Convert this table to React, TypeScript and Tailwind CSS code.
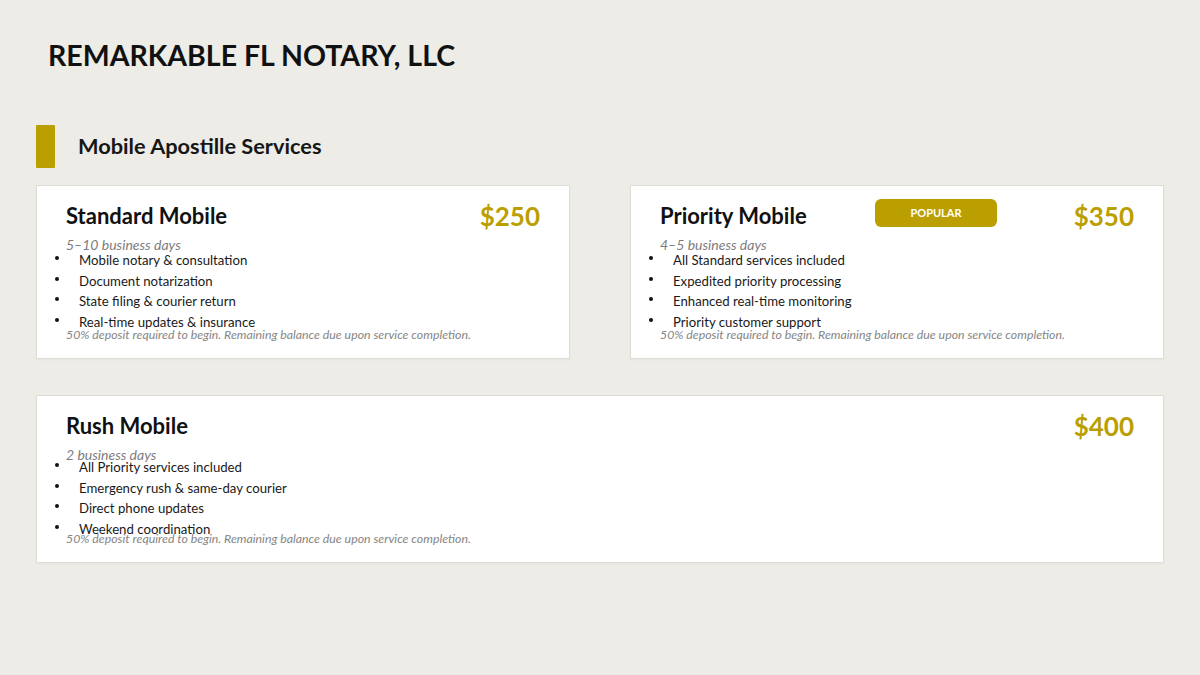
import { FC } from "react";

type Plan = {
  name: string;
  price: string;
  days: string;
  items: string[];
  popular?: boolean;
  tight?: boolean;
};

const plans: Plan[] = [
  {
    name: "Standard Mobile",
    price: "$250",
    days: "5–10 business days",
    items: [
      "Mobile notary & consultation",
      "Document notarization",
      "State filing & courier return",
      "Real-time updates & insurance",
    ],
  },
  {
    name: "Priority Mobile",
    price: "$350",
    days: "4–5 business days",
    popular: true,
    items: [
      "All Standard services included",
      "Expedited priority processing",
      "Enhanced real-time monitoring",
      "Priority customer support",
    ],
  },
];

const rush: Plan = {
  name: "Rush Mobile",
  price: "$400",
  days: "2 business days",
  tight: true,
  items: [
    "All Priority services included",
    "Emergency rush & same-day courier",
    "Direct phone updates",
    "Weekend coordination",
  ],
};

const PlanCard: FC<{ plan: Plan }> = ({ plan }) => {
  return (
    <div
      className={`relative bg-white border border-[#dedcd5] shadow-[0_1px_2px_rgba(0,0,0,0.04)] px-[29px] pt-[14px] ${
        plan.tight ? "h-[168px]" : "h-[174px]"
      }`}
    >
      {plan.popular && (
        <div className="absolute left-[244px] top-[13px] w-[122px] h-[28px] rounded-md bg-[#bb9f00] flex items-center justify-center text-white text-[11px] font-bold">
          POPULAR
        </div>
      )}
      <div className="flex justify-between items-center h-8">
        <h3 className="text-[22px] font-bold leading-none text-[#111]">{plan.name}</h3>
        <span className="text-[26px] font-bold leading-none text-[#bb9f00]">{plan.price}</span>
      </div>
      <p className="mt-[5px] text-[14px] italic leading-4 text-[#7d7d7d]">{plan.days}</p>
      <ul className={plan.tight ? "-mt-[6px]" : "-mt-[3px]"}>
        {plan.items.map((item) => (
          <li key={item} className="flex items-start text-[13.2px] leading-[20.5px] text-[#1a1a1a]">
            <span className="-ml-[11px] mt-[6px] w-[4px] h-[4px] rounded-full bg-[#111] shrink-0" />
            <span className="ml-[20px]">{item}</span>
          </li>
        ))}
      </ul>
      <p
        className={`text-[12.3px] italic leading-[14px] text-[#858585] ${
          plan.tight ? "-mt-[7px]" : "-mt-[4px]"
        }`}
      >
        50% deposit required to begin. Remaining balance due upon service completion.
      </p>
    </div>
  );
};

const App: FC = () => {
  return (
    <div className="w-[1200px] h-[675px] bg-[#edece6] font-['Lato',sans-serif] px-[36px] pt-[37px] overflow-hidden">
      <h1 className="ml-3 text-[28.5px] font-bold leading-9 text-[#111]">REMARKABLE FL NOTARY, LLC</h1>
      <div className="mt-[52px] flex items-center">
        <div className="w-[19px] h-[43px] bg-[#bb9f00] rounded-[1px]" />
        <h2 className="ml-[23px] text-[21.75px] font-bold leading-none text-[#161616]">
          Mobile Apostille Services
        </h2>
      </div>
      <div className="mt-[17px] grid grid-cols-2 gap-x-[60px]">
        {plans.map((p) => (
          <PlanCard key={p.name} plan={p} />
        ))}
      </div>
      <div className="mt-[36px]">
        <PlanCard plan={rush} />
      </div>
    </div>
  );
};

export default App;
